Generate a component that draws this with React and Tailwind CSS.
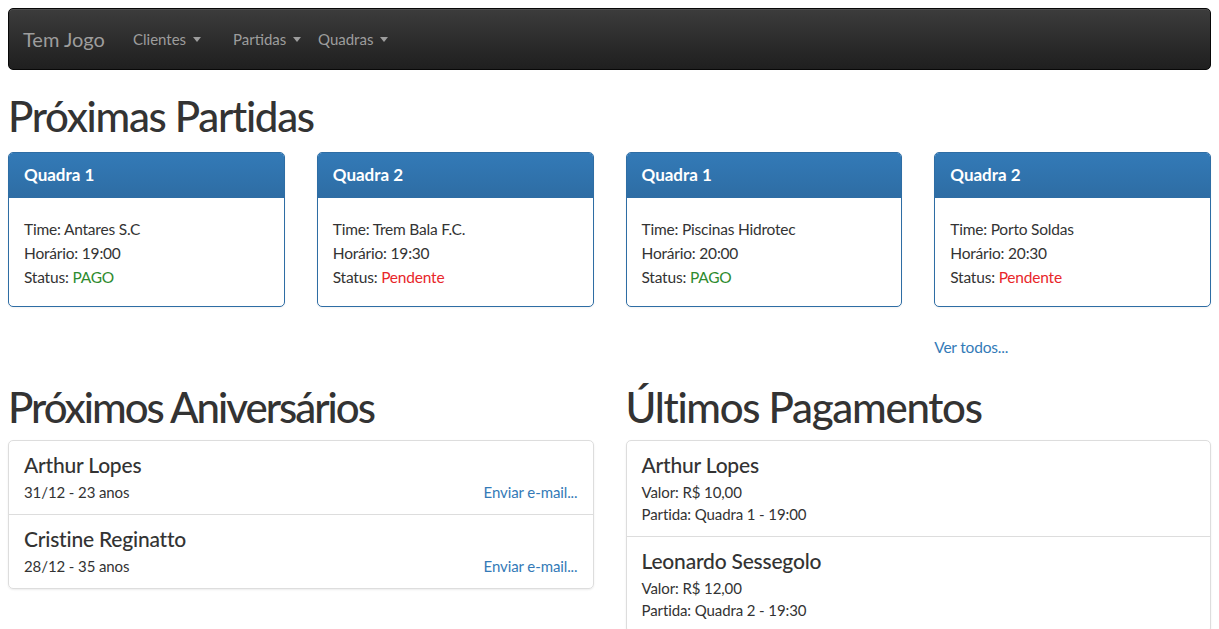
const partidas = [
  { quadra: 'Quadra 1', time: 'Antares S.C', horario: '19:00', pago: true },
  { quadra: 'Quadra 2', time: 'Trem Bala F.C.', horario: '19:30', pago: false },
  { quadra: 'Quadra 1', time: 'Piscinas Hidrotec', horario: '20:00', pago: true },
  { quadra: 'Quadra 2', time: 'Porto Soldas', horario: '20:30', pago: false },
]

const aniversarios = [
  { nome: 'Arthur Lopes', data: '31/12 - 23 anos' },
  { nome: 'Cristine Reginatto', data: '28/12 - 35 anos' },
]

const pagamentos = [
  { nome: 'Arthur Lopes', valor: 'R$ 10,00', partida: 'Quadra 1 - 19:00' },
  { nome: 'Leonardo Sessegolo', valor: 'R$ 12,00', partida: 'Quadra 2 - 19:30' },
]

const menus = [
  { label: 'Clientes', w: 'w-[100px]' },
  { label: 'Partidas', w: 'w-[85px]' },
  { label: 'Quadras', w: 'w-[85px]' },
]

function Caret() {
  return <span className="inline-block ml-[7px] w-0 h-0 border-x-[4px] border-x-transparent border-t-[5px] border-t-[#9d9d9d]" />
}

function Navbar() {
  return (
    <nav className="h-[62px] rounded-[5px] bg-gradient-to-b from-[#3c3c3c] to-[#1f1f1f] border border-[#080808] flex items-center pl-[14px] shadow-[inset_0_1px_0_rgba(255,255,255,0.1)]">
      <span className="w-[110px] text-[20px] text-[#9d9d9d]">Tem Jogo</span>
      {menus.map((m) => (
        <span key={m.label} className={`${m.w} text-[15px] text-[#9d9d9d] flex items-center`}>{m.label}<Caret /></span>
      ))}
    </nav>
  )
}

function PartidaCard({ p }) {
  return (
    <div className="rounded-[5px] border border-[#2e6da4] overflow-hidden bg-white shadow-[0_1px_2px_rgba(0,0,0,0.05)]">
      <div className="h-[45px] px-[15px] flex items-center bg-gradient-to-b from-[#337ab7] to-[#2e6da4] border-b border-[#2e6da4] text-white font-bold text-[17px]">{p.quadra}</div>
      <div className="px-[15px] pt-[19px] pb-[17px] text-[15.5px] tracking-[-0.2px] leading-[24px] text-[#333]">
        <div>Time: {p.time}</div>
        <div>Horário: {p.horario}</div>
        <div>Status: {p.pago ? <span className="text-[#2e8b2e]">PAGO</span> : <span className="text-[#e8262a]">Pendente</span>}</div>
      </div>
    </div>
  )
}

function ListItem({ first, children }) {
  return (
    <div className={`px-[15px] pt-[11px] pb-[11px] ${first ? '' : 'border-t border-[#ddd]'}`}>{children}</div>
  )
}

export default function App() {
  return (
    <div className="min-h-screen bg-white px-2 pt-2 text-[#333]" style={{ fontFamily: 'Lato, "Open Sans", sans-serif' }}>
      <Navbar />

      <h1 className="mt-[22px] mb-[12px] text-[42px] tracking-[-1.3px] leading-[48px] font-medium text-[#333]">Próximas Partidas</h1>
      <div className="grid grid-cols-4 gap-8">
        {partidas.map((p, i) => <PartidaCard key={i} p={p} />)}
      </div>
      <div className="grid grid-cols-4 gap-8">
        <div className="col-start-4 mt-[28px] text-[15.5px] tracking-[-0.2px] leading-[24px] text-[#337ab7]">Ver todos...</div>
      </div>

      <div className="grid grid-cols-2 gap-8 mt-[24px]">
        <div>
          <h2 className="text-[42px] tracking-[-2px] leading-[48px] font-medium mb-[9px]">Próximos Aniversários</h2>
          <div className="rounded-[5px] border border-[#ddd] shadow-[0_1px_2px_rgba(0,0,0,0.075)]">
            {aniversarios.map((a, i) => (
              <ListItem key={i} first={i === 0}>
                <div className="text-[21px] tracking-[-0.2px] leading-[26px] font-medium mb-[3px]">{a.nome}</div>
                <div className="flex justify-between text-[15px] tracking-[-0.1px] leading-[22px]">
                  <span>{a.data}</span>
                  <span className="text-[#337ab7]">Enviar e-mail...</span>
                </div>
              </ListItem>
            ))}
          </div>
        </div>
        <div>
          <h2 className="text-[42px] tracking-[-1.3px] leading-[48px] font-medium mb-[9px]">Últimos Pagamentos</h2>
          <div className="rounded-[5px] border border-[#ddd] shadow-[0_1px_2px_rgba(0,0,0,0.075)]">
            {pagamentos.map((p, i) => (
              <ListItem key={i} first={i === 0}>
                <div className="text-[21px] tracking-[-0.2px] leading-[26px] font-medium mb-[3px]">{p.nome}</div>
                <div className="text-[15px] tracking-[-0.1px] leading-[22px]">Valor: {p.valor}</div>
                <div className="text-[15px] tracking-[-0.1px] leading-[22px]">Partida: {p.partida}</div>
              </ListItem>
            ))}
          </div>
        </div>
      </div>
    </div>
  )
}
